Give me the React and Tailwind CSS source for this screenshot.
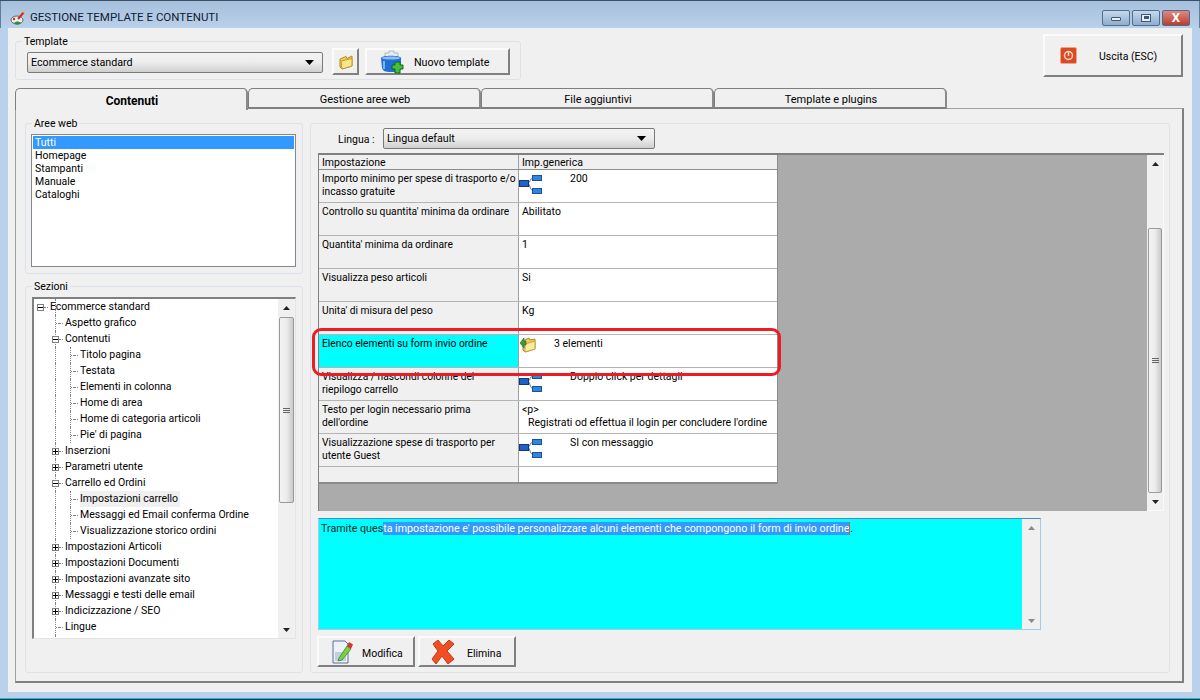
import React from 'react';

const font = { fontFamily: 'Roboto, "Liberation Sans", Arial, sans-serif' };

// Tree rows of the "Sezioni" panel: level, expander state, label
const treeRows = [
  [0, 'minus', 'Ecommerce standard'],
  [1, null, 'Aspetto grafico'],
  [1, 'minus', 'Contenuti'],
  [2, null, 'Titolo pagina'],
  [2, null, 'Testata'],
  [2, null, 'Elementi in colonna'],
  [2, null, 'Home di area'],
  [2, null, 'Home di categoria articoli'],
  [2, null, "Pie' di pagina"],
  [1, 'plus', 'Inserzioni'],
  [1, 'plus', 'Parametri utente'],
  [1, 'minus', 'Carrello ed Ordini'],
  [2, null, 'Impostazioni carrello', true],
  [2, null, 'Messaggi ed Email conferma Ordine'],
  [2, null, 'Visualizzazione storico ordini'],
  [1, 'plus', 'Impostazioni Articoli'],
  [1, 'plus', 'Impostazioni Documenti'],
  [1, 'plus', 'Impostazioni avanzate sito'],
  [1, 'plus', 'Messaggi e testi delle email'],
  [1, 'plus', 'Indicizzazione / SEO'],
  [1, null, 'Lingue'],
  [1, null, 'Chiavi'],
];

const settings = [
  { label: ['Importo minimo per spese di trasporto e/o', 'incasso gratuite'], icon: 'tree', value: '200' },
  { label: ["Controllo su quantita' minima da ordinare"], value: 'Abilitato' },
  { label: ["Quantita' minima da ordinare"], value: '1' },
  { label: ['Visualizza peso articoli'], value: 'Si' },
  { label: ["Unita' di misura del peso"], value: 'Kg' },
  { label: ['Elenco elementi su form invio ordine'], icon: 'folder', value: '3 elementi', active: true },
  { label: ['Visualizza / nascondi colonne del', 'riepilogo carrello'], icon: 'tree', value: 'Doppio click per dettagli' },
  { label: ['Testo per login necessario prima', "dell'ordine"], html: true },
  { label: ['Visualizzazione spese di trasporto per', 'utente Guest'], icon: 'tree', value: 'SI con messaggio' },
];

function Arrow({ down = true, color = '#000', w = 9 }) {
  const h = Math.ceil(w / 2);
  return (
    <svg width={w} height={h} viewBox={`0 0 ${w} ${h}`} className="block">
      <path d={down ? `M0 0H${w}L${w / 2} ${h}Z` : `M0 ${h}H${w}L${w / 2} 0Z`} fill={color} />
    </svg>
  );
}

function TreeIcon() {
  return (
    <svg width="23" height="19" viewBox="0 0 23 19" className="block shrink-0 mt-[3px]">
      <path d="M9 8.5C11 8 11 3 14 3M9 8.5C11 9 11 15.500 14 15.500" fill="none" stroke="#5b6f8c" />
      <rect x="0.5" y="5.500" width="9" height="6" fill="#1f62c4" stroke="#17357e" />
      <rect x="13.500" y="0.500" width="9" height="5" fill="#2f86e0" stroke="#1c4f9a" />
      <rect x="13.500" y="13.500" width="9" height="5" fill="#2f86e0" stroke="#1c4f9a" />
    </svg>
  );
}

function FolderIcon({ size = 16 }) {
  return (
    <svg width={size} height={size} viewBox="0 0 16 16" className="block shrink-0">
      <path d="M2 5L8 2.500L9 4.500L14 2V12L4 15L2 13Z" fill="#f5cf4f" stroke="#b58a1e" />
      <path d="M3 7L14 4.500V12L4 15Z" fill="#fbe58a" stroke="#c49a2a" />
    </svg>
  );
}

function FolderArrowIcon() {
  return (
    <svg width="16" height="16" viewBox="0 0 16 16" className="block shrink-0">
      <path d="M3 4L9 1L10 3L15 2V12L5 15L3 13Z" fill="#f1cd5a" stroke="#a98a2a" />
      <path d="M5 7L15 4V12L5 15Z" fill="#fbeaa0" stroke="#c4a53a" />
      <path d="M0 6L4 1V4H6V8H4V11Z" fill="#3f9a35" stroke="#1f6a20" strokeWidth="0.6" />
    </svg>
  );
}

function TemplateIcon() {
  return (
    <svg width="24" height="24" viewBox="0 0 24 24" className="block">
      <path d="M5 7V3H9V1H14V3H18V7Z" fill="#e8ebee" stroke="#a5adb6" strokeWidth="0.8" />
      <path d="M1 8C1 5 21 5 21 8V18C21 22 15 22 11 22C5 22 3 21 2 18Z" fill="#1f6fd6" />
      <path d="M2 8C2 6 20 6 20 8C20 10 2 10 2 8Z" fill="#8fbdf0" />
      <path d="M4 11V19" stroke="#7eb3ef" strokeWidth="2" />
      <path d="M15 12H20V15H23V19H20V23H15V19H12V15H15Z" fill="#46c03a" stroke="#17631c" />
    </svg>
  );
}

function PowerIcon() {
  return (
    <svg width="17" height="17" viewBox="0 0 17 17" className="block">
      <rect x="0.500" y="0.500" width="16" height="16" rx="1.500" fill="#dd4a22" stroke="#eba48e" />
      <circle cx="8.500" cy="8.500" r="4" fill="none" stroke="#fbd9cc" strokeWidth="1.500" />
      <path d="M8.500 5V9" stroke="#fbd9cc" strokeWidth="1.500" />
    </svg>
  );
}

function EditIcon() {
  return (
    <svg width="22" height="24" viewBox="0 0 22 24" className="block">
      <path d="M1 1H13L16 4V23H1Z" fill="#eef1f8" stroke="#5a6f9f" />
      <rect x="3" y="12" width="11" height="9" fill="#c2cde6" />
      <path d="M7 18L15 6L19 9L10 20L6 21Z" fill="#7ccf3f" stroke="#3c8a2a" strokeWidth="0.8" />
      <path d="M15 6L17 2L21 4.500L19 9Z" fill="#d5372a" />
    </svg>
  );
}

function DeleteIcon() {
  return (
    <svg width="24" height="26" viewBox="0 0 24 26" className="block">
      <path d="M2 5L7 1L12 7L18 1L23 5L16 12L23 20L17 25L11 17L5 25L1 20L7 12Z" fill="#f04e23" stroke="#c9361a" strokeLinejoin="round" />
    </svg>
  );
}

function AppIcon() {
  return (
    <svg width="17" height="16" viewBox="0 0 17 16" className="block">
      <ellipse cx="7" cy="10" rx="6" ry="4" fill="#eceff1" stroke="#59636d" />
      <path d="M4 13C6 11 9 11 11 13C9 15 6 15 4 13Z" fill="#2f8f2f" />
      <circle cx="4" cy="9" r="1.200" fill="#d8281c" />
      <path d="M8 9L14 2" stroke="#d8281c" strokeWidth="2" />
      <path d="M12 1L15 3" stroke="#f3c63a" strokeWidth="1.500" />
    </svg>
  );
}

function WinButton({ children, className }) {
  return (
    <div className={`h-[16px] rounded-[2px] border border-[#4e6d8f] flex items-center justify-center ${className}`}>
      {children}
    </div>
  );
}

function Button({ className = '', children }) {
  return (
    <div className={`flex items-center bg-[#f0f0f0] border-t-2 border-l-2 border-t-[#fbfbfb] border-l-[#fbfbfb] border-r-2 border-b-2 border-r-[#808080] border-b-[#808080] ${className}`}>
      {children}
    </div>
  );
}

function Dropdown({ label, className = '' }) {
  return (
    <div className={`flex items-center justify-between border border-[#7a7a7a] rounded-[2px] bg-gradient-to-b from-[#f4f4f4] via-[#ececec] to-[#cfcfcf] pl-[3px] pr-[8px] text-[10.700px] ${className}`}>
      <span className="pt-[2px]">{label}</span>
      <Arrow />
    </div>
  );
}

function Group({ title, className = '', children }) {
  return (
    <div className={`relative border border-[#dce2e8] rounded-[3px] ${className}`}>
      {title && <span className="absolute -top-[7px] left-[6px] bg-[#f0f0f0] px-[2px] leading-[14px]">{title}</span>}
      {children}
    </div>
  );
}

function Tab({ children, active }) {
  return (
    <div
      className={`w-[233px] flex justify-center rounded-t-[5px] border-t border-l border-[#7e7e7e] border-r-2 border-r-[#8a8a8a] bg-[#f0f0f0] pl-[2px] ${
        active ? 'h-[22px] font-bold text-[12px] pt-[3px]' : 'h-[21px] border-b-2 border-b-[#808080] pt-[3px] text-[11px]'
      }`}
    >
      {children}
    </div>
  );
}

function ScrollBar({ className = '', thumb, light }) {
  const arrow = light ? '#8a8a8a' : '#222';
  return (
    <div className={`flex flex-col items-center bg-[#f0f0f0] ${className}`}>
      <div className="h-[17px] shrink-0 flex items-center justify-center"><Arrow down={false} color={arrow} w={7} /></div>
      <div className="flex-1 w-full flex flex-col">
        {thumb && <div className="shrink-0" style={{ height: thumb[0] }} />}
        {thumb && (
          <div
            className="mx-[1px] border border-[#9a9a9a] rounded-[2px] bg-gradient-to-r from-[#f4f4f4] via-[#ececec] to-[#c9c9c9] flex flex-col items-center justify-center gap-[1px]"
            style={{ height: thumb[1] }}
          >
            <div className="w-[7px] h-px bg-[#666]" />
            <div className="w-[7px] h-px bg-[#666]" />
            <div className="w-[7px] h-px bg-[#666]" />
          </div>
        )}
      </div>
      <div className="h-[17px] shrink-0 flex items-center justify-center"><Arrow color={arrow} w={7} /></div>
    </div>
  );
}

function TreeRow({ level, exp, label, selected }) {
  return (
    <div className="relative h-[16px] flex items-center shrink-0" style={{ paddingLeft: 3 + level * 15 }}>
      {/* dotted guide lines of the tree */}
      <div className="absolute left-[21px] top-0 h-[16px] border-l border-dotted border-[#808080]" />
      {level === 2 && <div className="absolute left-[36px] top-0 h-[16px] border-l border-dotted border-[#808080]" />}
      <div className="relative w-[7px] h-[7px] shrink-0 flex items-center justify-end">
        {exp ? (
          <div className="relative w-[7px] h-[7px] border border-[#808080] bg-white">
            <div className="absolute left-0 top-[2px] w-[5px] h-px bg-black" />
            {exp === 'plus' && <div className="absolute left-[2px] top-0 w-px h-[5px] bg-black" />}
          </div>
        ) : (
          <div className="w-[3px] border-t border-dotted border-[#808080]" />
        )}
      </div>
      <div className="w-[4px] border-t border-dotted border-[#808080] shrink-0" />
      <span className={`relative ml-[2px] pr-[2px] leading-[16px] whitespace-nowrap ${selected ? 'bg-[#f0f0f0]' : ''}`}>{label}</span>
    </div>
  );
}

function SettingRow({ row }) {
  return (
    <div className="h-[33px] flex border-b border-[#b4b4b4] shrink-0">
      <div className={`w-[200px] shrink-0 pl-[3px] pt-[2px] text-[10.250px] leading-[13px] border-r border-[#a0a0a0] whitespace-nowrap ${row.active ? 'bg-[#00ffff]' : 'bg-[#f0f0f0]'}`}>
        {row.label.map((l) => <div key={l}>{l}</div>)}
      </div>
      <div className="flex-1 bg-white leading-[13px] pt-[2px] min-w-0">
        {row.html ? (
          <div className="pl-[3px]">
            <div>&lt;p&gt;</div>
            <div className="pl-[6px] whitespace-nowrap">Registrati od effettua il login per concludere l'ordine</div>
          </div>
        ) : row.icon ? (
          <div className="flex items-start h-full">
            {row.icon === 'tree' ? <TreeIcon /> : <div className="h-[16px] w-[24px] pl-[1px]"><FolderArrowIcon /></div>}
            <span className={`whitespace-nowrap ${row.icon === 'tree' ? 'pl-[28px]' : 'pl-[11px]'}`}>{row.value}</span>
          </div>
        ) : (
          <div className="pl-[3px]">{row.value}</div>
        )}
      </div>
    </div>
  );
}

export default function App() {
  return (
    <div className="w-[1200px] h-[700px] overflow-hidden flex flex-col bg-[#b9d1ea] text-[10.500px] text-black border-t border-[#3a4f66] relative" style={font}>
      {/* Title bar */}
      <div className="h-[27px] shrink-0 flex items-center pt-[6px] pl-[9px] pr-[9px] bg-gradient-to-b from-[#a6bfdb] to-[#b9d1ea] border-x border-[#5f7d9c]">
        <AppIcon />
        <span className="ml-[3px] text-[11.500px] text-[#0f1b33]">GESTIONE TEMPLATE E CONTENUTI</span>
        <div className="ml-auto flex gap-[2px]">
          <WinButton className="w-[28px] bg-gradient-to-b from-[#c7d9ec] to-[#8fadcd]">
            <div className="w-[10px] h-[4px] mt-[3px] bg-[#e8eef5] border border-[#3f5873] rounded-[1px]" />
          </WinButton>
          <WinButton className="w-[28px] bg-gradient-to-b from-[#c7d9ec] to-[#8fadcd]">
            <div className="w-[10px] h-[8px] bg-[#e8eef5] border border-[#3f5873] flex items-center justify-center"><div className="w-[5px] h-[3px] bg-[#3f5873]" /></div>
          </WinButton>
          <WinButton className="w-[28px] bg-gradient-to-b from-[#dc8a80] to-[#bb3a2c]">
            <span className="text-white font-bold text-[13px] leading-none">X</span>
          </WinButton>
        </div>
      </div>

      {/* Client area */}
      <div className="mx-[8px] h-[664px] shrink-0 bg-[#f0f0f0] flex flex-col">
        <div className="h-[60px] shrink-0 flex items-start px-[7px]">
          <Group title="Template" className="w-[506px] h-[39px] mt-[13px] flex items-start pl-[11px]">
            <Dropdown label="Ecommerce standard" className="w-[296px] h-[21px] mt-[10px]" />
            <Button className="w-[27px] h-[27px] ml-[9px] mt-[6px] justify-center"><FolderIcon /></Button>
            <Button className="w-[145px] h-[27px] ml-[6px] mt-[6px] pl-[13px]">
              <TemplateIcon />
              <span className="ml-[10px] pt-[4px] text-[10.700px]">Nuovo template</span>
            </Button>
          </Group>
          <Button className="ml-auto mr-[2px] mt-[6px] w-[140px] h-[43px] pl-[15px]">
            <PowerIcon />
            <span className="ml-[22px] pt-[2px]">Uscita (ESC)</span>
          </Button>
        </div>

        {/* Tabs */}
        <div className="h-[20px] shrink-0 flex items-start pl-[7px] relative z-10">
          <Tab active>Contenuti</Tab>
          <Tab>Gestione aree web</Tab>
          <Tab>File aggiuntivi</Tab>
          <Tab>Template e plugins</Tab>
        </div>

        {/* Tab page */}
        <div className="ml-[7px] mr-[8px] h-[575px] shrink-0 border-t border-l border-[#a0a0a0] border-r-2 border-b-2 border-r-[#808080] border-b-[#808080] flex gap-[7px] pl-[9px] pr-[12px] pt-[14px] pb-[8px]">
          <div className="w-[278px] shrink-0 flex flex-col gap-[12px]">
            <Group title="Aree web" className="h-[151px] pl-[5px] pt-[10px]">
              <div className="w-[265px] h-[133px] border border-[#828790] bg-white p-[1px] leading-[13px]">
                <div className="bg-[#3399ff] text-white pl-[2px]">Tutti</div>
                {['Homepage', 'Stampanti', 'Manuale', 'Cataloghi'].map((a) => <div key={a} className="pl-[2px]">{a}</div>)}
              </div>
            </Group>
            <Group title="Sezioni" className="h-[387px] pl-[6px] pt-[10px]">
              <div className="w-[264px] h-[342px] border-t-2 border-l-2 border-t-[#808080] border-l-[#808080] border-r border-b border-r-[#e4e4e4] border-b-[#e4e4e4] bg-white flex overflow-hidden">
                <div className="flex-1 overflow-hidden">
                  {treeRows.map(([level, exp, label, selected]) => (
                    <TreeRow key={label} level={level} exp={exp} label={label} selected={selected} />
                  ))}
                </div>
                <ScrollBar className="w-[17px]" thumb={[1, 186]} />
              </div>
            </Group>
          </div>

          <Group className="flex-1 min-w-0 pl-[7px] pt-[4px]">
            <div className="flex items-center h-[21px] mb-[4px]">
              <span className="ml-[20px] w-[45px] pt-[2px]">Lingua :</span>
              <Dropdown label="Lingua default" className="w-[272px] h-[21px]" />
            </div>
            <div className="w-[846px] h-[358px] bg-[#ababab] border-t-2 border-l border-[#808080] flex">
              <div className="w-[459px] h-[329px] bg-white border-b-2 border-r border-[#8c8c8c] flex flex-col shrink-0">
                <div className="h-[15px] flex bg-[#f0f0f0] border-b border-[#8c8c8c] leading-[15px] shrink-0">
                  <div className="w-[200px] pl-[3px] border-r border-[#a0a0a0]">Impostazione</div>
                  <div className="pl-[3px]">Imp.generica</div>
                </div>
                {settings.map((row) => <SettingRow key={row.label[0]} row={row} />)}
                <div className="flex-1 flex">
                  <div className="w-[200px] bg-[#f0f0f0] border-r border-[#a0a0a0]" />
                </div>
              </div>
              <div className="flex-1" />
              <ScrollBar className="w-[17px] border-r border-b border-[#fafafa]" thumb={[56, 265]} />
            </div>

            <div className="w-[723px] h-[112px] mt-[7px] flex border border-[#a9c8e4] border-t-[#4f86bd] bg-[#f0f0f0]">
              <div className="flex-1 bg-[#00ffff] border-r border-white pl-[2px] pt-[3px] leading-[13px] whitespace-nowrap text-[10.700px]">
                <span className="text-[#06281f]">Tramite ques</span>
                <span className="bg-[#3399ff] text-white">ta impostazione e' possibile personalizzare alcuni elementi che compongono il form di invio ordine</span>
                <span className="border-l border-[#d9601a]">.</span>
              </div>
              <ScrollBar className="w-[17px]" light />
            </div>

            <div className="flex gap-[3px] mt-[6px] -ml-[1px]">
              <Button className="w-[98px] h-[31px] pl-[13px]">
                <EditIcon />
                <span className="ml-[8px] pt-[4px]">Modifica</span>
              </Button>
              <Button className="w-[98px] h-[31px] pl-[11px]">
                <DeleteIcon />
                <span className="ml-[12px] pt-[4px]">Elimina</span>
              </Button>
            </div>
          </Group>
        </div>
      </div>

      <div className="flex-1" />
      <div className="h-px shrink-0 bg-[#08c5d9]" />
      <div className="h-px shrink-0 bg-[#1b2f44]" />

      {/* Red callout around the active row */}
      <div className="absolute left-[312px] top-[327px] w-[469px] h-[48px] border-[3px] border-[#ed1c24] rounded-[9px]" />
    </div>
  );
}
